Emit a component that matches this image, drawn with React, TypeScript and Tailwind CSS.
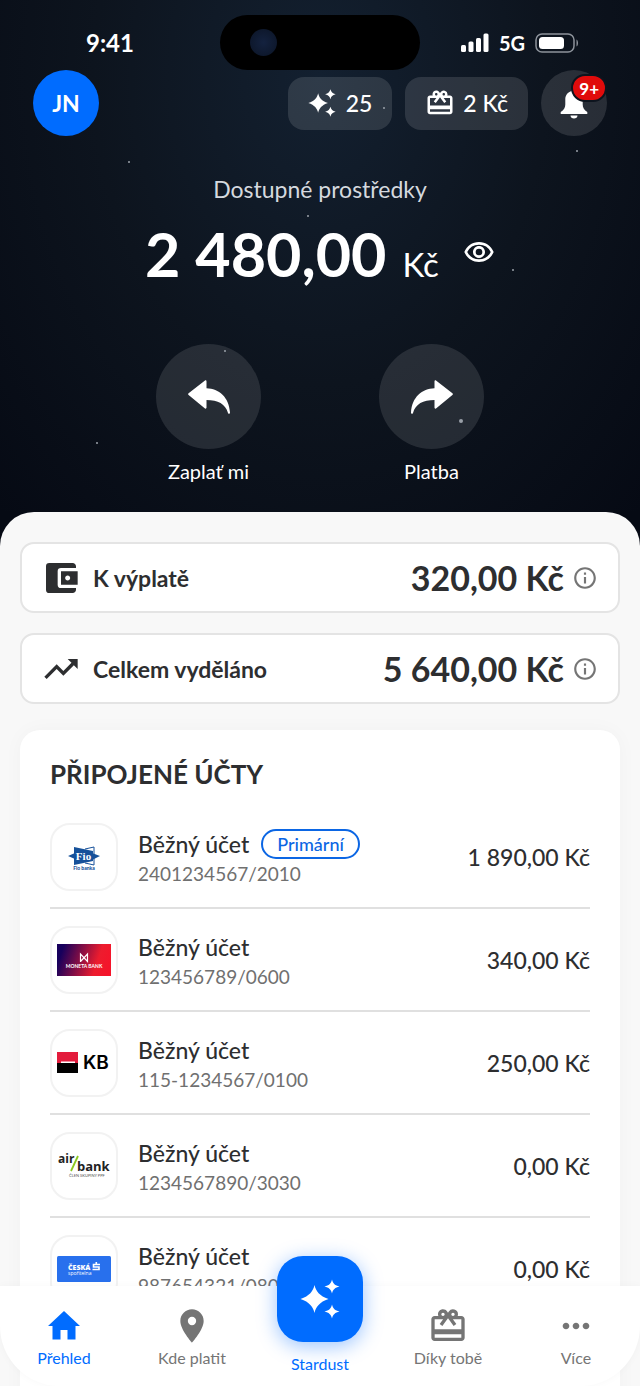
import React from 'react';
import {
  MdAccountBalanceWallet,
  MdInfoOutline,
  MdMoreHoriz,
  MdOutlineRedeem,
  MdOutlineRemoveRedEye,
  MdPlace,
  MdTrendingUp,
} from 'react-icons/md';

interface Account {
  number: string;
  balance: string;
  logo: React.ReactNode;
  primary?: boolean;
}

const Sparkles = ({ className }: { className: string }) => (
  <svg viewBox="0 0 40 40" fill="currentColor" className={className} aria-hidden="true">
    <path d="M14.500 6C15.800 12 19.500 17 28.500 20C19.500 23 15.800 28 14.500 34C13.200 28 9.500 23 .5 20C9.500 17 13.200 12 14.500 6Z" />
    <path d="M32 .5C33 4.500 35 6.500 39.500 7.500C35 8.500 33 10.500 32 14.500C31 10.500 29 8.500 24.500 7.500C29 6.500 31 4.500 32 .5Z" />
    <path d="M32 25.500C33 29.500 35 31.500 39.500 32.500C35 33.500 33 35.500 32 39.500C31 35.500 29 33.500 24.500 32.500C29 31.500 31 29.500 32 25.500Z" />
  </svg>
);

const Bell = () => (
  <svg viewBox="0 0 28 32" fill="currentColor" className="h-8 w-7" aria-hidden="true">
    <path d="M14 1c1.300 0 2.300 1 2.300 2.300v.6c3.900 1 6.400 4.200 6.400 8.300v5.300c0 3.200 1.500 5.400 4.600 7.500V27H.7v-2c3.100-2.100 4.600-4.300 4.600-7.500v-5.300c0-4.100 2.500-7.300 6.400-8.300v-.6C11.700 2 12.700 1 14 1z" />
    <path d="M10.500 28.500h7c0 1.900-1.500 3-3.500 3s-3.500-1.100-3.500-3z" />
  </svg>
);

const House = () => (
  <svg viewBox="0 0 40 40" fill="currentColor" className="size-10" aria-hidden="true">
    <path d="M20 5L4 20h4.500v13.500H16.500V24h7v9.500h8V20H36z" />
  </svg>
);

const CurvedArrow = ({ className = '' }: { className?: string }) => (
  <svg viewBox="0 0 42 34" fill="currentColor" className={`h-[34px] w-[42px] ${className}`} aria-hidden="true">
    <path d="M17 .5c.8-.5 1.500 0 1.500 1v6.700C31 8.500 41 17 42 32.500c0 1.500-1.500 1.800-2 .4C37.500 24 30 20 18.500 20v7.500c0 1-.7 1.500-1.500 1L.6 15c-.7-.5-.7-1.300 0-1.800z" />
  </svg>
);

const SignalBars = () => (
  <svg viewBox="0 0 28 19" fill="currentColor" className="h-[19px] w-7" aria-hidden="true">
    <rect x="0" y="12" width="5" height="7" rx="1.500" />
    <rect x="7.500" y="8.500" width="5" height="10.500" rx="1.500" />
    <rect x="15" y="5" width="5" height="14" rx="1.500" />
    <rect x="22.500" y="0.500" width="5" height="18.500" rx="1.500" />
  </svg>
);

const Battery = () => (
  <svg viewBox="0 0 44 20" className="h-5 w-11" aria-hidden="true">
    <rect x="1" y="1" width="38" height="18" rx="6" fill="none" stroke="#8d939b" strokeWidth="1.500" />
    <rect x="4" y="4" width="25" height="12" rx="3.500" fill="#fff" />
    <path d="M41.500 6.500c2 1 2 6 0 7z" fill="#8d939b" />
  </svg>
);

const FioLogo = () => (
  <svg viewBox="0 0 54 54" className="w-[54px]" aria-label="Fio banka">
    <path d="M11 26l7-3v6zM43 26l-8-3v7z" fill="#16519a" />
    <path d="M17 17l19 4v10l-19 4z" fill="#16519a" />
    <path d="M28 19l9-2v18l-9-2" stroke="#16519a" strokeWidth="1" fill="none" />
    <text x="26.500" y="30" textAnchor="middle" fill="#fff" fontFamily="Liberation Serif, serif" fontWeight="700" fontSize="11">Fio</text>
    <text x="27" y="40" textAnchor="middle" fill="#16519a" fontFamily="Lato, sans-serif" fontWeight="900" fontSize="5">Fio banka</text>
  </svg>
);

const MonetaLogo = () => (
  <svg viewBox="0 0 54 32" className="w-[54px]" aria-label="Moneta Bank">
    <defs>
      <linearGradient id="moneta" x1="0" y1="0.400" x2="1" y2="0.600">
        <stop offset="0.050" stopColor="#17005c" />
        <stop offset="0.750" stopColor="#ed1c2e" />
        <stop offset="1" stopColor="#f5142a" />
      </linearGradient>
    </defs>
    <rect width="54" height="32" fill="url(#moneta)" />
    <path d="M23.500 18v-8l7 7.500v-7.500l-7 7.500" fill="none" stroke="#fff" strokeWidth="1.200" />
    <text x="27" y="24" textAnchor="middle" fill="#fff" fontFamily="Lato, sans-serif" fontWeight="700" fontSize="5">MONETA BANK</text>
  </svg>
);

const KbLogo = () => (
  <svg viewBox="0 0 54 22" className="w-[54px]" aria-label="KB">
    <rect width="21" height="11" fill="#e31b3c" />
    <rect y="11" width="21" height="10" fill="#000" />
    <rect x="4" y="9.500" width="14" height="1.500" fill="#fff" />
    <text x="26" y="17" fill="#000" fontFamily="Inter, sans-serif" fontWeight="600" fontSize="19">KB</text>
  </svg>
);

const AirBankLogo = () => (
  <svg viewBox="0 0 54 32" className="w-[54px]" aria-label="Air Bank, člen skupiny PPF">
    <text x="1" y="13" fill="#222" fontFamily="Open Sans, sans-serif" fontWeight="700" fontSize="12">air</text>
    <path d="M21 6L14 21" stroke="#8cc81e" strokeWidth="1.800" />
    <text x="20" y="21" fill="#222" fontFamily="Open Sans, sans-serif" fontWeight="700" fontSize="13">bank</text>
    <text x="12" y="27" fill="#555" fontFamily="Lato, sans-serif" fontSize="4">ČLEN SKUPINY PPF</text>
  </svg>
);

const SporitelnaLogo = () => (
  <svg viewBox="0 0 54 26" className="w-[54px]" aria-label="Česká spořitelna">
    <rect width="54" height="26" rx="1.500" fill="#2870ed" />
    <text x="11" y="14" fill="#fff" fontFamily="Open Sans, sans-serif" fontWeight="800" fontSize="7">ČESKÁ</text>
    <text x="11" y="19" fill="#fff" fontFamily="Open Sans, sans-serif" fontSize="5">spořitelna</text>
    <path d="M43 8.500h-6.500v2.500H42v2.500h-6.500M39.300 6v2" fill="none" stroke="#fff" strokeWidth="1.600" />
  </svg>
);

const accounts: Account[] = [
  { number: '2401234567/2010', balance: '1 890,00 Kč', logo: <FioLogo />, primary: true },
  { number: '123456789/0600', balance: '340,00 Kč', logo: <MonetaLogo /> },
  { number: '115-1234567/0100', balance: '250,00 Kč', logo: <KbLogo /> },
  { number: '1234567890/3030', balance: '0,00 Kč', logo: <AirBankLogo /> },
  { number: '987654321/0800', balance: '0,00 Kč', logo: <SporitelnaLogo /> },
];

// Stars scattered over the dark header
const stars = [
  { left: '20%', top: 161, size: 2 },
  { left: '48%', top: 215, size: 2 },
  { left: '59.8%', top: 107, size: 2 },
  { left: '90%', top: 150, size: 2 },
  { left: '80%', top: 269, size: 2 },
  { left: '35%', top: 350, size: 2 },
  { left: '71.7%', top: 419, size: 4 },
  { left: '15%', top: 442, size: 2 },
];

const SummaryCard = ({ icon, label, amount }: { icon: React.ReactNode; label: string; amount: string }) => (
  <section className="flex h-[71px] items-center rounded-[14px] border-2 border-[#e4e4e4] bg-white pr-5 pl-[19px]">
    {icon}
    <h2 className="ml-3 text-[23px] leading-7 font-bold">{label}</h2>
    <span className="ml-auto text-[34px] leading-10 font-bold">{amount}</span>
    <button aria-label={`Informace: ${label}`} className="ml-2 text-[#757575]">
      <MdInfoOutline className="size-[26px]" />
    </button>
  </section>
);

const AccountRow = ({ account }: { account: Account }) => (
  <li className="flex items-center border-b-2 border-[#e0e0e0] pt-[17px] pb-4 last:border-b-0">
    <div className="flex size-[68px] shrink-0 items-center justify-center rounded-[20px] border-2 border-[#f2f2f2]">
      {account.logo}
    </div>
    <div className="ml-5 pt-[3px]">
      <div className="flex h-[30px] items-center gap-3">
        <h3 className="text-[23px] leading-7 font-medium">Běžný účet</h3>
        {account.primary && (
          <span className="rounded-full border-2 border-[#0b66e4] px-[14px] text-[18px] leading-[26px] font-medium text-[#0b66e4]">
            Primární
          </span>
        )}
      </div>
      <p className="text-[19px] leading-[30px] text-[#707070]">{account.number}</p>
    </div>
    <span className="ml-auto text-[23px] leading-7 font-medium">{account.balance}</span>
  </li>
);

const NavItem = ({ icon, label, active = false }: { icon: React.ReactNode; label: string; active?: boolean }) => (
  <a
    href="#"
    className={`flex flex-1 flex-col items-center pt-5 text-base leading-6 ${active ? 'text-[#006cff]' : 'text-[#757575]'}`}
  >
    {icon}
    {label}
  </a>
);

export default function App() {
  return (
    <div className="relative h-screen overflow-hidden bg-[#060a14] font-['Lato',sans-serif] text-[#2d2e30]">
      <div className="h-full overflow-hidden">
        <header className="relative bg-[radial-gradient(ellipse_at_50%_15%,#132030_0%,#0d141e_50%,#060a14_100%)] pb-[29px] text-white">
          {stars.map((star) => (
            <span
              key={star.left}
              className="absolute z-10 rounded-full bg-[#9aa0a8]"
              style={{ left: star.left, top: star.top, width: star.size, height: star.size }}
            />
          ))}

          <div className="grid grid-cols-[1fr_200px_1fr] items-center pt-[15px]">
            <div className="text-center text-[24px] leading-7 font-bold">9:41</div>
            <div className="flex h-[55px] items-center rounded-full bg-black pl-[30px]">
              <span className="size-[27px] rounded-full bg-[radial-gradient(circle,#14223f_0%,#0b1425_100%)]" />
            </div>
            <div className="flex items-center justify-center gap-[10px] pr-5 text-[20px] leading-7 font-bold">
              <SignalBars />
              <span>5G</span>
              <Battery />
            </div>
          </div>

          <div className="flex items-center gap-[13px] px-[33px]">
            <button className="mr-auto size-[66px] rounded-full bg-[#006cff] text-[23px] font-bold">JN</button>
            <button className="flex h-[53px] items-center gap-[10px] rounded-2xl bg-white/12 px-5 text-[23px] font-medium">
              <Sparkles className="size-7" />
              25
            </button>
            <button className="flex h-[53px] items-center gap-2 rounded-2xl bg-white/12 px-5 text-[23px] font-medium">
              <MdOutlineRedeem className="size-[30px]" />
              2 Kč
            </button>
            <button
              aria-label="Oznámení"
              className="relative flex size-[66px] items-center justify-center rounded-full bg-white/12"
            >
              <Bell />
              <span className="absolute top-1 right-0 flex h-7 items-center rounded-full border-2 border-[#0d141e] bg-[#e00b0b] px-[6px] text-[17px] leading-none font-bold">
                9+
              </span>
            </button>
          </div>

          <p className="mt-[38px] text-center text-[23px] leading-[30px] text-[#d5d9df]">Dostupné prostředky</p>
          <div className="mt-2 flex items-baseline justify-center">
            <strong className="text-[61px] leading-[84px] font-bold">2 480,00</strong>
            <span className="ml-4 text-[33px] leading-10">Kč</span>
            <button aria-label="Skrýt zůstatek" className="ml-6 self-center pb-1">
              <MdOutlineRemoveRedEye className="size-8" />
            </button>
          </div>

          <div className="mt-12 flex justify-center gap-[118px] text-[20px] leading-6">
            <button className="flex w-[105px] flex-col items-center gap-[10px]">
              <span className="flex size-[105px] items-center justify-center rounded-full bg-white/11">
                <CurvedArrow />
              </span>
              Zaplať mi
            </button>
            <button className="flex w-[105px] flex-col items-center gap-[10px]">
              <span className="flex size-[105px] items-center justify-center rounded-full bg-white/11">
                <CurvedArrow className="-scale-x-100" />
              </span>
              Platba
            </button>
          </div>
        </header>

        <main className="flex flex-col rounded-t-[34px] bg-[#f8f8f8] px-5 pt-[30px]">
          <div className="flex flex-col gap-5">
            <SummaryCard icon={<MdAccountBalanceWallet className="size-10" />} label="K výplatě" amount="320,00 Kč" />
            <SummaryCard icon={<MdTrendingUp className="size-10" />} label="Celkem vyděláno" amount="5 640,00 Kč" />
          </div>

          <section className="mt-[26px] rounded-[20px] bg-white px-[30px] pt-6 pb-[150px] shadow-[0_0_20px_rgba(0,0,0,0.03)]">
            <h2 className="mb-3 text-[26px] leading-10 font-bold">PŘIPOJENÉ ÚČTY</h2>
            <ul>
              {accounts.map((account) => (
                <AccountRow key={account.number} account={account} />
              ))}
            </ul>
          </section>
        </main>
      </div>

      <nav className="absolute inset-x-0 bottom-0 flex h-[100px] rounded-b-[60px] bg-white shadow-[0_0_8px_rgba(0,0,0,0.03)]">
        <NavItem icon={<House />} label="Přehled" active />
        <NavItem icon={<MdPlace className="size-10" />} label="Kde platit" />
        <a href="#" className="-mt-[30px] flex flex-1 flex-col items-center gap-[10px] text-base leading-6 text-[#006cff]">
          <span className="flex size-[86px] items-center justify-center rounded-[26px] bg-[#006cff] text-white shadow-[0_4px_20px_rgba(0,108,255,0.4)]">
            <Sparkles className="size-10" />
          </span>
          Stardust
        </a>
        <NavItem icon={<MdOutlineRedeem className="size-10" />} label="Díky tobě" />
        <NavItem icon={<MdMoreHoriz className="size-10" />} label="Více" />
      </nav>
    </div>
  );
}
